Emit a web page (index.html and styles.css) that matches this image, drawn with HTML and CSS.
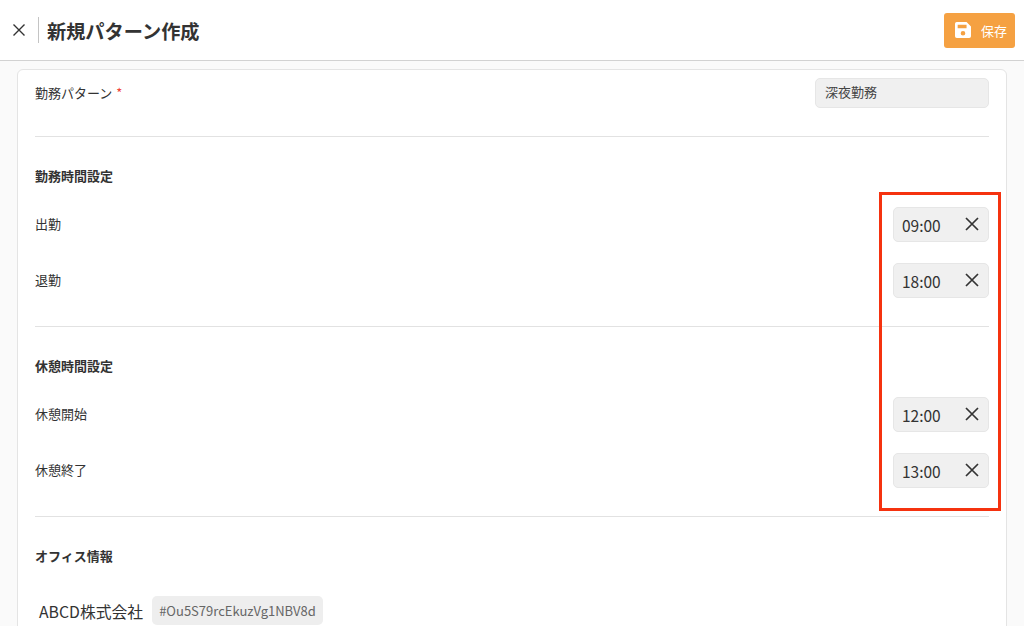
FILE: index.html
```html
<!doctype html>
<html lang="ja">
  <head>
    <meta charset="UTF-8" />
    <meta name="viewport" content="width=device-width, initial-scale=1.0" />
    <title>新規パターン作成</title>
    <link rel="stylesheet" href="styles.css">
  </head>
  <body>
    <header class="top">
      <svg class="close" viewBox="0 0 14 14"><path d="M1.5 1.5l11 11M12.5 1.5l-11 11" /></svg>
      <span class="line"></span>
      <h1>新規パターン作成</h1>
      <button class="save">
        <svg viewBox="0 0 18 18"><path fill-rule="evenodd" d="M2 0h11l5 5v11a2 2 0 0 1-2 2H2a2 2 0 0 1-2-2V2a2 2 0 0 1 2-2zM3 3v4h10V3zM9 10a2.6 2.6 0 1 0 0 5.2A2.6 2.6 0 0 0 9 10z" /></svg>
        保存
      </button>
    </header>

    <main class="card">
      <div class="row first">
        <span class="name">勤務パターン <i>*</i></span>
        <div class="field wide">深夜勤務</div>
      </div>
      <hr />

      <h2>勤務時間設定</h2>
      <div class="row">
        <span class="label">出勤</span>
        <div class="field time">09:00<svg viewBox="0 0 14 14"><path d="M1 1l12 12M13 1L1 13" /></svg></div>
      </div>
      <div class="row">
        <span class="label">退勤</span>
        <div class="field time">18:00<svg viewBox="0 0 14 14"><path d="M1 1l12 12M13 1L1 13" /></svg></div>
      </div>
      <hr />

      <h2>休憩時間設定</h2>
      <div class="row">
        <span class="label">休憩開始</span>
        <div class="field time">12:00<svg viewBox="0 0 14 14"><path d="M1 1l12 12M13 1L1 13" /></svg></div>
      </div>
      <div class="row">
        <span class="label">休憩終了</span>
        <div class="field time">13:00<svg viewBox="0 0 14 14"><path d="M1 1l12 12M13 1L1 13" /></svg></div>
      </div>
      <hr />

      <h2>オフィス情報</h2>
      <div class="office">
        <span class="company">ABCD株式会社</span>
        <span class="tag">#Ou5S79rcEkuzVg1NBV8d</span>
      </div>
    </main>

    <div class="mark"></div>
  </body>
</html>
```

FILE: styles.css
```css
* {
  padding: 0;
  margin: 0;
  box-sizing: border-box;
}
html,
body {
  height: 626px;
  overflow: hidden;
}
body {
  position: relative;
  background-color: #fafafa;
  color: #333;
  font-family: "Noto Sans CJK JP", "Noto Sans", sans-serif;
  font-size: 13px;
}
.top {
  display: flex;
  align-items: center;
  height: 61px;
  padding: 0 9px 0 12px;
  background-color: #fff;
  border-bottom: 1px solid #d2d2d2;
}
.close {
  width: 14px;
  height: 14px;
  fill: none;
  stroke: #333;
  stroke-width: 1.4;
}
.line {
  width: 1px;
  height: 26px;
  margin: 0 8px 0 12px;
  background-color: #c4c4c4;
}
h1 {
  margin-top: 2px;
  font-size: 19.2px;
  font-weight: 700;
  line-height: 26px;
}
.save {
  display: flex;
  align-items: center;
  gap: 10px;
  width: 71px;
  height: 35px;
  margin-left: auto;
  padding-left: 11px;
  border: 0;
  border-radius: 3px;
  background-color: #f5a142;
  color: #fff;
  font-family: inherit;
  font-size: 13px;
}
.save svg {
  width: 16px;
  height: 16px;
  fill: #fff;
}
.card {
  width: 990px;
  height: 580px;
  margin: 8px 0 0 17px;
  padding: 8px 17px 0;
  background-color: #fff;
  border: 1px solid #e4e4e4;
  border-radius: 6px;
}
.row {
  display: flex;
  justify-content: space-between;
  align-items: center;
  height: 35px;
  margin-bottom: 21px;
}
.first {
  align-items: flex-start;
  height: 30px;
}
.name {
  line-height: 30px;
}
.name i {
  margin-left: 1px;
  color: #f04438;
  font-style: normal;
}
.label {
  margin-top: -2px;
}
hr {
  margin-top: 28px;
  border: 0;
  border-top: 1px solid #e2e2e2;
}
h2 {
  margin: 29px 0 22px;
  font-size: 13px;
  font-weight: 700;
  line-height: 19px;
}
.field {
  display: flex;
  align-items: center;
  background-color: #f0f0f0;
  border: 1px solid #e6e6e6;
  border-radius: 5px;
}
.wide {
  width: 174px;
  height: 30px;
  padding: 0 0 4px 9px;
  font-size: 13px;
  color: #444;
}
.time {
  justify-content: space-between;
  width: 96px;
  height: 35px;
  padding: 1px 9px 0 8px;
  font-size: 15.5px;
}
.time svg {
  width: 14px;
  height: 14px;
  margin-top: -3px;
  fill: none;
  stroke: #333;
  stroke-width: 1.7;
}
.office {
  display: flex;
  align-items: center;
  gap: 9px;
  margin: 31px 0 0 4px;
  font-size: 15.8px;
}
.company {
  margin-top: 2px;
}
.tag {
  height: 29px;
  padding: 0 7px;
  background-color: #eee;
  border-radius: 5px;
  color: #666;
  font-size: 13px;
  line-height: 29px;
}
.mark {
  position: absolute;
  left: 879px;
  top: 192px;
  width: 122px;
  height: 319px;
  border: 3px solid #f5320f;
}
```
